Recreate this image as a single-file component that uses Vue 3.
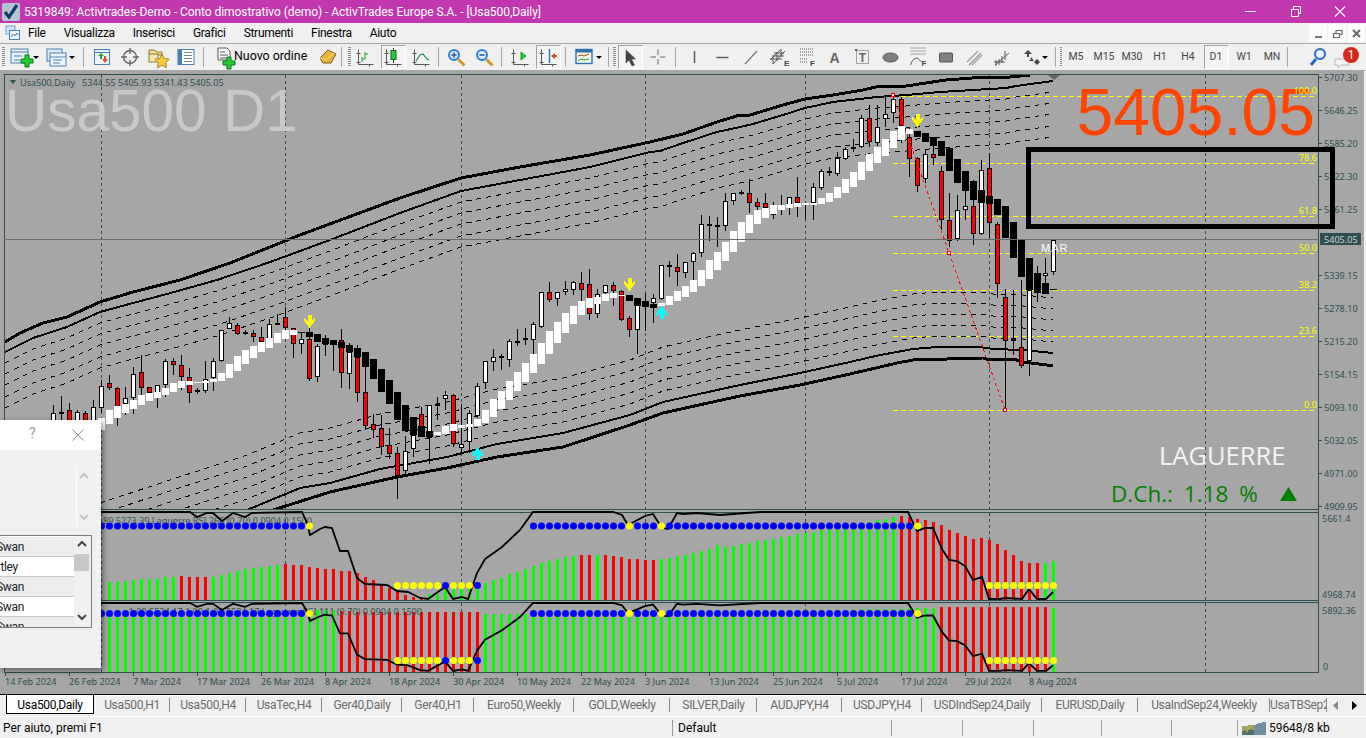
<script setup>
// ---------- toolbar icons (centre of every button is 0,0) ----------
const axes = '<path d="M-6.5 -7.5V7.5H8.5M-8.5 5.5h4M-8.5 -3.5h4M4.5 7.5v2" stroke="#555" fill="none"/>'
const zoomIcon = (plus) => `<circle cx="-2" cy="-2" r="5" fill="#dbeafa" stroke="#2f7fd0" stroke-width="2"/><path d="M2.500 2.500l6 6" stroke="#c89a2a" stroke-width="3"/><path d="M-4.500 -2h5${plus ? 'M-2 -4.500v5' : ''}" stroke="#2a5a9a" stroke-width="1.600"/>`
const dots = (x, y, w) => `<path d="M${x} ${y}h${w}M${x} ${y + 3}h${w}M${x} ${y + 6}h${w}" stroke="#555" stroke-dasharray="1 1"/>`

const icons = {
  newchart: '<rect x="-11" y="-8" width="17" height="14" fill="#eaf2fb" stroke="#4a7fb0"/><path d="M-11 -5h17M-8 -1h8M-8 3h6" stroke="#4a7fb0"/><path d="M-1 2h4v-4h4v4h4v4h-4v4h-4v-4h-4z" fill="#22cc33" stroke="#0a7a18"/>',
  profile: '<rect x="-10" y="-8" width="15" height="12" fill="#dde9f7" stroke="#4a7fb0"/><rect x="-7" y="-4" width="16" height="13" fill="#eef5fc" stroke="#4a7fb0"/><path d="M-7 0h16M-4 3h9M-4 6h7" stroke="#4a7fb0"/>',
  market: '<rect x="-7.5" y="-7.5" width="15" height="15" fill="#eaf2fb" stroke="#4a7fb0"/><path d="M-7.5 -4.5h15" stroke="#4a7fb0"/><path d="M-4 -1l3 -3l3 3h-2v3h-2v-3z" fill="#22aa33"/><path d="M0 2h2v-3h2v3h2l-3 4z" fill="#d8502a"/>',
  cross: '<circle r="6.5" fill="none" stroke="#666" stroke-width="1.4"/><path d="M0 -9v6M0 3v6M-9 0h6M3 0h6" stroke="#666" stroke-width="1.4"/>',
  star: '<path d="M-9 -7h6l2 2h5v3h-13z" fill="#f2d98a" stroke="#8a7a3a"/><rect x="-9" y="-3" width="9" height="8" fill="#f7e7b0" stroke="#8a7a3a"/><path d="M4 -3l2.2 4.5l5 .7l-3.6 3.5l.9 5l-4.5 -2.4l-4.5 2.4l.9 -5l-3.6 -3.5l5 -.7z" fill="#f7cf3a" stroke="#a8862a"/>',
  data: '<rect x="-8" y="-7.5" width="16" height="15" fill="#fff" stroke="#4a7fb0"/><rect x="-8" y="-7.5" width="4" height="15" fill="#4a7fb0"/><path d="M-2 -4.5h8M-2 -1.5h8M-2 1.5h8M-2 4.5h8" stroke="#6a8aa8"/>',
  order: '<path d="M-6 -9h9l3 3v9h-12z" fill="#fff" stroke="#555"/><path d="M-4 -5h5M-4 -2h8M-4 1h8" stroke="#555"/><path d="M-1 4h4v-4h4v4h4v4h-4v4h-4v-4h-4z" fill="#22cc33" stroke="#0a7a18"/>',
  auto: '<path d="M-8 1l8 -8l8 4l-5 9h-8z" fill="#e8b23a" stroke="#7a5a1a"/><path d="M-8 1l6 2l8 -7" fill="none" stroke="#fbe08a"/>',
  bars: axes + '<path d="M-3 5V0M-3 2H0M0 2V-5M0 -3H3" stroke="#119a22" fill="none"/>',
  candle: axes + '<path d="M0.5 -9V6" stroke="#333"/><rect x="-2" y="-6.500" width="5" height="9" fill="#22cc33" stroke="#145a2a"/>',
  line: axes + '<path d="M-5 4L-1 -2L2 -3L6 2L8 3" stroke="#2a8a4a" fill="none" stroke-width="1.2"/>',
  zin: zoomIcon(true),
  zout: zoomIcon(false),
  scroll: axes + '<path d="M1 -5v8l5 -4z" fill="#22cc33" stroke="#119a22"/>',
  shift: axes + '<path d="M1.5 -8V6" stroke="#2a6fb0" stroke-width="1.4"/><path d="M3 -1l4 -3v2h2v2h-2v2z" fill="#c8501a"/>',
  template: '<rect x="-8" y="-7.5" width="16" height="14" fill="#f5f7e5" stroke="#2f6fb0" stroke-width="1.4"/><rect x="-8" y="-7.5" width="16" height="3" fill="#2f6fb0"/><path d="M-6 -1l3 -1l3 1l5 -2" stroke="#b0401a" fill="none"/><path d="M-6 4l3 -2l3 1l5 -1" stroke="#2a9a4a" fill="none"/>',
  cursor: '<path d="M-4 -7V6l3 -3l3 6l2.500 -1l-3 -6h4z" fill="#444" stroke="#444" stroke-width=".6"/>',
  plus: '<path d="M0 -7.500v5.500M0 2v5.500M-7.500 0h5.500M2 0h5.500" stroke="#666"/>',
  vline: '<path d="M0.500 -6v12" stroke="#555" stroke-width="1.4"/>',
  hline: '<path d="M-6 0.500h12" stroke="#555" stroke-width="1.4"/>',
  trend: '<path d="M-6 7L6 -6" stroke="#777" stroke-width="1.2"/>',
  equi: '<path d="M-9 3l10 -10M-6 7L6 -6M-9 2h12M-7 -1h12M-5 -4h10M-6 7v-7M-2 4v-9M2 0v-8" stroke="#555" fill="none"/><text x="5" y="9" class="ic-l">E</text>',
  fib: dots(-7, -8, 13) + '<path d="M-7 2h8M-7 5h8" stroke="#555" stroke-dasharray="1 1"/><text x="3" y="9" class="ic-l">F</text>',
  letter: '<text x="0" y="6" text-anchor="middle" class="ic-a">A</text>',
  textbox: '<rect x="-5.500" y="-6.500" width="12" height="13" fill="none" stroke="#555" stroke-dasharray="1 1"/><rect x="-7" y="-8" width="2" height="2" fill="#555"/><text x="0.500" y="5" text-anchor="middle" class="ic-a ic-t">T</text>',
  ellipse: '<ellipse cx="0" cy="0.500" rx="7.500" ry="4.500" fill="#808080" stroke="#555"/>',
  fan: dots(-8, -9, 15) + '<path d="M-8 8Q-6 1 -1 1L3 5" stroke="#555" fill="none"/><text x="3" y="9" class="ic-l">F</text>',
  rect: '<rect x="-6.500" y="-4" width="13" height="9" rx="1" fill="#808080" stroke="#555"/>',
  chan: '<path d="M-7 5L4 -6M-5 8L7 -4M-2 8L8 -2" stroke="#999" stroke-width="1.3"/>',
  fork: '<path d="M-7 8L7 -4M-6 3V9M-3 2V8M0 -1V6M3 -6V3M-8 5H3" stroke="#555" fill="none"/>',
  arrows: '<path d="M-8 -3l4 -4l4 4h-3v3h-2v-3z" fill="#444"/><path d="M-3 3h2l-1 1zM-1 0l3 4l-4 0z" fill="#444"/><path d="M2 5l3 -3l3 3l-3 3z" fill="#444"/>',
  search: '<circle cx="2" cy="-3" r="5" fill="#eaf3fc" stroke="#2568c8" stroke-width="2"/><path d="M-2 2l-5 6" stroke="#2568c8" stroke-width="3"/>'
}

const tb1 = [
  { t: 'h', w: 8 },
  { i: 'newchart', w: 36, c: 14, dd: 28 }, { i: 'profile', w: 36, c: 13, dd: 28 },
  { t: 's', w: 8 },
  { i: 'market', w: 28 }, { i: 'cross', w: 28 }, { i: 'star', w: 28 }, { i: 'data', w: 28 },
  { t: 's', w: 8 }
]
const tb2 = [
  { i: 'auto', w: 20 }, { t: 's', w: 8 }, { t: 'h', w: 5 },
  { i: 'bars', w: 28 }, { i: 'candle', w: 28, on: true }, { i: 'line', w: 28 },
  { t: 's', w: 7 },
  { i: 'zin', w: 28 }, { i: 'zout', w: 28 },
  { t: 's', w: 8 },
  { i: 'scroll', w: 28 }, { i: 'shift', w: 28, on: true },
  { t: 's', w: 8 },
  { i: 'template', w: 35, c: 14, dd: 29 },
  { t: 's', w: 6 }, { t: 'h', w: 5 },
  { i: 'cursor', w: 28, on: true }, { i: 'plus', w: 28 },
  { t: 's', w: 8 },
  { i: 'vline', w: 28 }, { i: 'hline', w: 29 }, { i: 'trend', w: 28 }, { i: 'equi', w: 28 }, { i: 'fib', w: 28 },
  { i: 'letter', w: 27 }, { i: 'textbox', w: 28 }, { i: 'ellipse', w: 29 }, { i: 'fan', w: 27 }, { i: 'rect', w: 28 },
  { i: 'chan', w: 28 }, { i: 'fork', w: 28 }, { i: 'arrows', w: 36, c: 16, dd: 29 },
  { t: 's', w: 6 }, { t: 'h', w: 4 }
]
const frames = ['M5', 'M15', 'M30', 'H1', 'H4', 'D1', 'W1', 'MN']

const menus = ['File', 'Visualizza', 'Inserisci', 'Grafici', 'Strumenti', 'Finestra', 'Aiuto']

const tabs = [
  ['Usa500,Daily', 88], ['Usa500,H1', 76], ['Usa500,H4', 76], ['UsaTec,H4', 76], ['Ger40,Daily', 80], ['Ger40,H1', 72],
  ['Euro50,Weekly', 100], ['GOLD,Weekly', 96], ['SILVER,Daily', 87], ['AUDJPY,H4', 85], ['USDJPY,H4', 80],
  ['USDIndSep24,Daily', 120], ['EURUSD,Daily', 96], ['UsaIndSep24,Weekly', 132], ['UsaTBSep24,Weekly', 57]
]
const statusSeps = [672, 891, 962, 1033, 1101, 1171, 1237]

// ---------- candles: x, high, body top, body bottom, low, kind ----------
const candles = [
  [53,405,413,430,440,'w'],[61,396,412,414,440,'d'],[69,403,410,430,440,'r'],[77,410,412,430,440,'w'],[85,411,413,430,440,'r'],
  [93,400,407,430,440,'w'],[101,380,386,408,413,'w'],[109,375,383,388,390,'r'],[117,387,388,407,426,'r'],[125,387,398,404,415,'w'],
  [133,367,374,398,414,'w'],[141,355,372,388,395,'r'],[149,387,387,393,393,'r'],[157,385,385,393,408,'w'],[165,359,361,385,397,'w'],
  [173,358,361,365,375,'r'],[181,355,365,377,390,'r'],[189,368,377,393,403,'r'],[197,388,390,392,394,'d'],[205,361,379,391,393,'w'],
  [213,358,361,378,391,'w'],[221,330,330,361,362,'w'],[229,317,323,329,329,'w'],[237,323,325,334,335,'r'],[245,330,332,334,335,'d'],
  [253,330,333,337,342,'r'],[261,327,337,342,342,'r'],[269,319,324,342,345,'w'],[277,314,323,325,325,'d'],[285,307,317,328,330,'r'],
  [293,328,328,344,358,'r'],[301,332,339,344,354,'w'],[309,328,339,379,381,'r'],[317,344,346,377,382,'w'],[325,335,343,345,356,'d'],
  [333,340,344,345,371,'d'],[341,329,340,373,388,'r'],[349,343,352,374,389,'w'],[357,345,357,393,402,'r'],[365,360,392,426,430,'r'],
  [373,414,424,430,438,'r'],[381,415,428,447,455,'r'],[389,428,445,454,459,'r'],[397,447,453,476,499,'r'],[405,436,451,471,474,'w'],
  [413,417,435,449,457,'w'],[421,407,414,427,437,'r'],[429,405,405,438,464,'w'],[437,397,404,406,420,'d'],[445,391,395,399,410,'w'],
  [453,394,395,444,447,'r'],[461,404,444,448,453,'w'],[469,410,413,442,453,'w'],[477,383,386,416,418,'w'],[485,361,361,383,389,'w'],
  [493,349,357,362,371,'w'],[501,354,356,358,370,'d'],[509,339,341,360,367,'w'],[517,329,341,343,346,'d'],[525,328,338,340,345,'d'],
  [533,322,324,340,354,'w'],[541,292,292,327,328,'w'],[549,282,292,300,302,'r'],[557,292,292,299,306,'w'],[565,281,289,292,295,'w'],
  [573,281,282,290,295,'w'],[581,272,283,290,302,'r'],[589,269,284,314,320,'r'],[597,289,294,314,318,'w'],[605,285,285,293,296,'w'],
  [613,282,285,291,306,'r'],[621,290,291,320,321,'r'],[629,316,318,330,337,'r'],[637,298,298,330,354,'w'],[645,293,303,306,331,'d'],
  [653,294,298,303,323,'w'],[661,265,265,299,300,'w'],[669,261,265,267,277,'d'],[677,254,267,272,286,'r'],[685,262,262,273,278,'w'],
  [693,252,253,262,280,'w'],[701,215,224,253,257,'w'],[709,216,224,226,241,'d'],[717,217,225,227,247,'d'],[725,193,201,226,231,'w'],
  [733,193,193,201,205,'w'],[741,190,192,194,195,'d'],[749,179,193,203,213,'r'],[757,198,202,207,213,'r'],[765,193,203,208,213,'r'],
  [773,202,205,215,219,'w'],[781,195,207,208,215,'d'],[789,197,197,205,215,'w'],[797,177,197,203,217,'r'],[805,203,203,205,219,'d'],
  [813,183,187,203,220,'w'],[821,169,171,188,190,'w'],[829,167,171,173,176,'d'],[837,152,158,174,176,'w'],[845,147,149,159,160,'w'],
  [853,139,147,149,152,'w'],[861,115,118,147,148,'w'],[869,105,118,142,147,'r'],[877,105,127,143,146,'w'],[885,97,114,119,127,'w'],
  [893,94,99,113,123,'w'],[901,97,99,126,143,'r'],[909,127,137,159,177,'r'],[917,157,158,186,192,'r'],[925,150,154,179,183,'w'],
  [933,145,154,158,165,'r'],[941,166,171,220,230,'r'],[949,193,220,241,247,'r'],[957,195,210,239,241,'w'],[965,190,206,210,220,'w'],
  [973,180,206,234,245,'r'],[981,160,170,234,235,'w'],[989,153,168,223,238,'r'],[997,222,224,284,298,'r'],[1005,289,297,341,408,'r'],
  [1013,290,339,341,355,'r'],[1021,280,347,366,368,'r'],[1029,290,290,361,376,'w'],[1037,266,275,293,302,'d'],[1045,258,273,276,285,'w'],
  [1053,239,240,272,275,'w']
]

// blocks of the smoothed band: x, top, bottom, white?
const bandTop = [
  [101,418,430,1],[109,410,424,1],[117,406,418,1],[125,404,413,1],[133,400,409,1],[141,395,405,1],[149,393,401,1],[157,392,398,1],
  [165,388,395,1],[173,383,392,1],[181,381,388,1],[189,381,385,1],[197,382,383,1],[205,381,383,1],[213,379,382,1],[221,373,381,1],
  [229,364,378,1],[237,356,371,1],[245,350,364,1],[253,346,358,1],[261,342,352,1],[269,338,348,1],[277,333,343,1],[285,330,339,1],
  [293,330,335,1],[301,332,333,0],[309,332,337,0],[317,334,342,0],[325,338,344,0],[333,340,345,0],[341,342,348,0],[349,345,352,0],
  [357,348,357,0],[365,352,367,0],[373,359,379,0],[381,369,392,0],[389,380,404,0],[397,392,420,0],[405,405,431,0],[413,417,435,0],
  [421,426,437,0],[429,431,437,0],[437,432,435,1],[445,426,434,1],[453,424,431,1],[461,425,428,1],[469,424,427,1],[477,419,426,1],
  [485,410,423,1],[493,399,417,1],[501,391,409,1],[509,381,400,1],[517,372,391,1],[525,363,382,1],[533,354,373,1],[541,343,364,1],
  [549,331,354,1],[557,322,343,1],[565,313,333,1],[573,306,324,1],[581,301,315,1],[589,298,308,1],[597,297,304,1],[605,294,301,1],
  [613,293,298,1],[621,295,296,1],[629,295,301,0],[637,298,306,0],[645,301,307,0],[653,304,308,0],[661,303,306,1],[669,296,305,1],
  [677,291,301,1],[685,286,297,1],[693,280,292,1],[701,270,286,1],[709,260,279,1],[717,252,270,1],[725,242,261,1],[733,231,252,1],
  [741,222,242,1],[749,215,233,1],[757,210,224,1],[765,208,218,1],[773,205,214,1],[781,205,210,1],[789,204,208,1],[797,203,207,1],
  [805,203,205,1],[813,203,205,1],[821,198,204,1],[829,193,202,1],[837,187,198,1],[845,179,193,1],[853,172,187,1],[861,162,180,1],
  [869,154,171,1],[877,147,163,1],[885,139,156,1],[893,131,148,1],[901,126,140,1],[909,129,134,1],[917,131,137,0],[925,133,142,0],
  [933,137,146,0],[941,141,156,0],[949,148,171,0],[957,159,183,0],[965,171,191,0],[973,181,200,0],[981,190,203,0],[989,196,204,0],
  [997,199,215,0],[1005,206,238,0],[1013,222,258,0],[1021,240,277,0],[1029,258,290,0],[1037,273,293,0],[1045,283,294,0],[1053,289,290,0]
]

// ---------- envelopes ----------
const T1 = [[5,342],[20,333],[43,323],[67,317],[100,302],[133,292],[180,280],[230,263],[300,235],[400,198],[461,178],[520,167],[590,155],[650,142],[683,134],[717,122],[740,115],[750,115],[783,105],[805,99],[833,95],[863,90],[880,86],[906,86],[946,80],[985,77],[1010,77],[1030,75]]
const T2 = [[5,352],[33,338],[67,327],[100,312],[133,303],[167,294],[217,280],[270,262],[330,240],[400,213],[461,191],[520,180],[590,167],[650,152],[660,151],[683,143],[717,132],[740,127],[753,124],[783,115],[805,108],[833,102],[877,97],[906,95],[940,92],[1006,88],[1016,86],[1053,81]]
const L1 = [[247,510],[300,488],[330,483],[380,469],[447,457],[497,444],[563,433],[630,415],[663,402],[690,396],[740,385],[800,373],[850,362],[880,355],[897,352],[913,349],[937,347],[980,347],[993,349],[1023,350],[1053,353]]
const L2 = [[273,510],[330,492],[397,477],[447,468],[497,457],[563,447],[630,425],[663,413],[690,407],[740,396],[800,385],[850,374],[880,367],[897,363],[913,360],[947,359],[983,358],[990,360],[1013,359],[1023,362],[1047,365],[1053,365]]
const toPts = (a, dy = 0) => a.map(([x, y]) => `${x},${y + dy}`).join(' ')
const upDash = [11, 22, 33, 45, 56].map((d) => toPts(T2, d))
// the lower dashed family runs on to the left, below the bottom of the pane
const L1far = [[100, 558], [170, 535], ...L1]
const lowDash = [-11, -22, -33, -44, -55].map((d) => toPts(L1far, d))
const grids = [101, 285, 461, 645, 805, 989, 1205]

// ---------- fibonacci levels ----------
const fibs = [['100.0', 96], ['78.6', 163], ['61.8', 216], ['50.0', 253], ['38.2', 290], ['23.6', 336], ['0.0', 410]]
const marks = [[893, 95], [949, 253], [1005, 410]]

// ---------- indicator panes ----------
const rsi = [[100,512],[190,512],[197,517],[207,513],[213,513],[222,521],[233,513],[245,517],[252,513],[302,512],[307,523],[310,535],[320,529],[325,527],[332,528],[340,551],[348,551],[357,578],[365,584],[387,585],[397,591],[408,592],[420,598],[428,599],[445,587],[453,599],[462,597],[468,599],[477,573],[485,559],[502,547],[520,530],[533,512],[613,512],[622,515],[628,525],[645,516],[653,514],[662,528],[668,529],[677,513],[683,514],[697,513],[720,515],[760,512],[908,512],[917,531],[925,528],[933,528],[942,549],[949,560],[957,561],[965,566],[973,580],[982,577],[989,599],[1000,599],[1005,598],[1022,599],[1029,589],[1037,599],[1046,599],[1053,592]]
const rsi1 = toPts(rsi)
const rsi2 = rsi.map(([x, y]) => `${x},${(603 + (y - 512) * 0.78).toFixed(1)}`).join(' ')

const leftTops = [582,582,581,580,579,579,579,577,577,576,577,577,577,577,575,573,571,569,568,567,566,565,564,565,565,567,568]
const midZy = [207,207,212,212,220,230,240,255,263,275,285,290,290,283,280,268,268,268,265,260,250,240,233,222,215,208,198,190,183,178,172,167,165,165,165,165,168,170,176,178,180,180,177,173,168,165,158,152,147,135]
const endZy = [57,52,48,50,58,60,66,75,90,98,107,117,115,120,132,150,165,183,188,188,188,183]
const isRed1 = (x) => (x >= 181 && x <= 205) || (x >= 285 && x <= 421) || x === 581 || x === 589 || (x >= 605 && x <= 653) || (x >= 901 && x <= 1037)
const hist1 = []
const hist2 = []
for (let x = 109; x <= 1053; x += 8) {
  let top
  if (x <= 317) top = leftTops[(x - 109) / 8]
  else if (x <= 717) top = 500 + midZy[(x - 325) / 8] / 3
  else if (x < 885) top = 547 - ((x - 725) / 160) * 28
  else top = 500 + endZy[(x - 885) / 8] / 3
  hist1.push({ x, top: Math.round(top), red: isRed1(x) })

  const red2 = (x >= 341 && x <= 477) || (x >= 941 && x <= 1045)
  let t2 = 610
  if (x >= 341 && x <= 349) t2 = 611
  else if (x >= 357 && x <= 477) t2 = 612
  else if (x >= 485 && x < 533) t2 = 614
  else if (x >= 533 && x <= 720) t2 = 612
  else if (x > 720 && x <= 933) t2 = Math.round(612 - ((x - 720) / 213) * 4)
  else if (x >= 941) t2 = x === 1053 ? 608 : 607
  hist2.push({ x, top: t2, red: red2 })
}
const dotsTop = []
for (let x = 101; x <= 917; x += 8) {
  if (x > 309 && x < 533) continue
  dotsTop.push({ x, y: x === 309 || x === 629 || x === 661 || x === 917 ? 1 : 0 })
}
const dotsLow = []
for (let x = 397; x <= 477; x += 8) dotsLow.push({ x, y: x === 445 || x === 477 ? 0 : 1 })
for (let x = 989; x <= 1053; x += 8) dotsLow.push({ x, y: 1 })

// ---------- axis ----------
const prices = [['5707.30',77],['5646.25',110],['5585.20',143],['5522.30',176],['5461.25',209],['5339.15',275],['5278.10',308],['5215.20',341],['5154.15',374],['5093.10',407],['5032.05',440],['4971.00',473],['4909.95',506]]
const dates = ['14 Feb 2024','26 Feb 2024','7 Mar 2024','17 Mar 2024','26 Mar 2024','8 Apr 2024','18 Apr 2024','30 Apr 2024','10 May 2024','22 May 2024','3 Jun 2024','13 Jun 2024','25 Jun 2024','5 Jul 2024','17 Jul 2024','29 Jul 2024','8 Aug 2024']
const arrowDown = '-2,0 2,0 2,6 5,3 6,5 0,13 -6,5 -5,3 -2,6'
const arrowUp = '-2,13 2,13 2,7 5,10 6,8 0,0 -6,8 -5,10 -2,7'
const rows = [['Black Swan', 'g'], ['Gartley', 'w'], ['White Swan', 'g'], ['Black Swan', 'w'], ['White Swan', 'g']]
</script>

<template>
  <div class="app">
    <header class="title">
      <svg class="logo" width="18" height="18" viewBox="0 0 18 18">
        <rect width="18" height="18" rx="2" fill="#b8c4d2" />
        <path d="M3 9l4 5l8 -12" fill="none" stroke="#123a6b" stroke-width="3.200" />
      </svg>
      <span class="title-text">5319849: Activtrades-Demo - Conto dimostrativo (demo) - ActivTrades Europe S.A. - [Usa500,Daily]</span>
      <div class="win">
        <svg width="45" height="22" viewBox="0 0 45 22"><path d="M17 10.500h11" stroke="#fff" /></svg>
        <svg width="45" height="22" viewBox="0 0 45 22"><path d="M18.500 8.500h7v7h-7zM20.500 8v-2.500h7v7h-2" fill="none" stroke="#fff" /></svg>
        <svg width="45" height="22" viewBox="0 0 45 22"><path d="M17 5.500l10 10M27 5.500l-10 10" stroke="#fff" stroke-width="1.100" /></svg>
      </div>
    </header>

    <nav class="menu">
      <svg class="menu-ic" width="16" height="16" viewBox="0 0 16 16">
        <rect x="1" y="1" width="9" height="8" fill="#d5e5f7" stroke="#6f9ccc" />
        <rect x="4.500" y="5.500" width="10" height="9" fill="#f2f7fd" stroke="#4a7fb0" />
        <path d="M6 12l2 -3l2 2l2 -3l1 2" fill="none" stroke="#4a7fb0" />
      </svg>
      <span v-for="m in menus" :key="m" class="menu-item">{{ m }}</span>
      <div class="mdi">
        <span class="mdi-b"><svg width="17" height="17" viewBox="0 0 17 17"><rect x="5" y="11" width="7" height="2" fill="#777" /></svg></span>
        <span class="mdi-b"><svg width="17" height="17" viewBox="0 0 17 17"><path d="M4.500 8.500h6v4h-6zM7 8V5.500h6v4h-2" fill="none" stroke="#666" stroke-width="1.200" /></svg></span>
        <span class="mdi-b"><svg width="17" height="17" viewBox="0 0 17 17"><path d="M5 5l7 7M12 5l-7 7" stroke="#666" stroke-width="2" /></svg></span>
      </div>
    </nav>

    <div class="toolbar">
      <template v-for="(b, i) in tb1" :key="'a' + i">
        <span v-if="b.t === 'h'" class="handle" :style="{ width: b.w + 'px' }"></span>
        <span v-else-if="b.t === 's'" class="sep" :style="{ width: b.w + 'px' }"></span>
        <span v-else class="btn" :style="{ width: b.w + 'px' }">
          <svg :width="b.w" height="26" :viewBox="`${-(b.c ?? b.w / 2)} -13 ${b.w} 26`" v-html="icons[b.i]"></svg>
          <i v-if="b.dd" class="dd" :style="{ left: b.dd - 3 + 'px' }"></i>
        </span>
      </template>
      <span class="btn order">
        <svg width="32" height="26" viewBox="-16 -13 32 26" v-html="icons.order"></svg>
        <span class="order-text">Nuovo ordine</span>
      </span>
      <template v-for="(b, i) in tb2" :key="'b' + i">
        <span v-if="b.t === 'h'" class="handle" :style="{ width: b.w + 'px' }"></span>
        <span v-else-if="b.t === 's'" class="sep" :style="{ width: b.w + 'px' }"></span>
        <span v-else class="btn" :class="{ on: b.on }" :style="{ width: b.w + 'px' }">
          <svg :width="b.w" height="26" :viewBox="`${-(b.c ?? b.w / 2)} -13 ${b.w} 26`" v-html="icons[b.i]"></svg>
          <i v-if="b.dd" class="dd" :style="{ left: b.dd - 3 + 'px' }"></i>
        </span>
      </template>
      <span v-for="f in frames" :key="f" class="tf" :class="{ on: f === 'D1' }">{{ f }}</span>
      <span class="sep tail"></span>
      <span class="btn srch"><svg width="28" height="26" viewBox="-14 -13 28 26" v-html="icons.search"></svg></span>
      <span class="btn chat">
        <svg width="28" height="26" viewBox="0 0 28 26">
          <path d="M3 15h14v6h-8l-3 3v-3h-3z" fill="#f4f4f4" stroke="#b8b8b8" />
          <circle cx="19" cy="11" r="8" fill="#d8261c" />
        </svg>
        <span class="badge">1</span>
      </span>
    </div>

    <main class="chart">
      <svg class="plot" width="1366" height="623" viewBox="0 71 1366 623">
        <defs>
          <clipPath id="main-pane"><rect x="5" y="75" width="1313" height="434" /></clipPath>
        </defs>
        <rect x="0" y="71" width="1366" height="623" fill="#a6a6a6" />
        <rect x="1364" y="71" width="2" height="623" fill="#f4f4f4" />

        <!-- frames -->
        <g class="crisp" stroke="#2f4f4f" fill="none">
          <path d="M4.500 74.500H1318.500V672.500H4.500z" />
          <path d="M4 509.500H1319M4 512.500H1319M4 600.500H1319M4 602.500H1319" />
        </g>
        <g class="crisp" stroke="#2f4f4f">
          <line v-for="g in grids" :key="g" :x1="g + .5" y1="75" :x2="g + .5" y2="672" stroke-dasharray="3 3" />
        </g>

        <!-- fib levels under the price -->
        <g class="crisp" stroke="#ffff00">
          <line v-for="f in fibs" :key="f[0]" x1="893" :y1="f[1] + .5" x2="1317" :y2="f[1] + .5" stroke-dasharray="5 3" />
        </g>

        <!-- envelopes -->
        <g class="crisp" fill="none" stroke="#000" clip-path="url(#main-pane)">
          <polyline v-for="(p, i) in upDash" :key="'u' + i" :points="p" stroke-dasharray="5 5" />
          <polyline v-for="(p, i) in lowDash" :key="'l' + i" :points="p" stroke-dasharray="5 5" />
          <polyline :points="toPts(T1)" stroke-width="3" />
          <polyline :points="toPts(T2)" stroke-width="2" />
          <polyline :points="toPts(L1)" stroke-width="2" />
          <polyline :points="toPts(L2)" stroke-width="3" />
        </g>

        <!-- candles -->
        <g class="crisp">
          <g v-for="c in candles" :key="c[0]">
            <line :x1="c[0] + .5" :y1="c[1]" :x2="c[0] + .5" :y2="c[4]" stroke="#000" />
            <rect v-if="c[5] === 'd'" :x="c[0] - 2" :y="c[2]" width="5" :height="c[3] - c[2]" fill="#000" />
            <rect v-else :x="c[0] - 1.5" :y="c[2] + .5" width="4" :height="Math.max(c[3] - c[2] - 1, 1)" :fill="c[5] === 'r' ? '#ff0000' : '#ffffff'" stroke="#000" />
          </g>
          <rect v-for="b in bandTop" :key="'b' + b[0]" :x="b[0] - 3" :y="b[1]" width="7" :height="b[2] - b[1]" :fill="b[3] ? '#ffffff' : '#000000'" />
        </g>

        <!-- trend of the fibonacci -->
        <line class="crisp" x1="893" y1="95" x2="1005" y2="410" stroke="#ff0000" stroke-dasharray="3 3" />
        <g class="crisp">
          <rect v-for="m in marks" :key="m[0]" :x="m[0] - 1.500" :y="m[1] - 1.500" width="3" height="3" fill="#fff" stroke="#ff0000" />
        </g>

        <!-- signal arrows -->
        <g class="crisp">
          <polygon :points="arrowDown" transform="translate(309.500 315)" fill="#ffff00" />
          <polygon :points="arrowDown" transform="translate(629.500 278)" fill="#ffff00" />
          <polygon :points="arrowDown" transform="translate(917.500 114)" fill="#ffff00" />
          <polygon :points="arrowUp" transform="translate(477.500 447)" fill="#00ffff" />
          <polygon :points="arrowUp" transform="translate(661.500 306)" fill="#00ffff" />
        </g>
        <path d="M1048 75h12l-6 5z" fill="#666" />

        <!-- price line -->
        <line class="crisp" x1="4" y1="239.500" x2="1319" y2="239.500" stroke="#6a6a6a" />

        <!-- labels on the chart -->
        <path d="M10 80h6l-3 4z" fill="#2f4f4f" />
        <text x="20" y="85.500" class="ax">Usa500,Daily</text>
        <text x="82" y="85.500" class="ax">5344.55 5405.93 5341.43 5405.05</text>
        <text x="5" y="131" class="big">Usa500 D1</text>
        <text x="1315" y="135" text-anchor="end" class="quote">5405.05</text>
        <text x="1041" y="252" class="mar">MAR</text>
        <text x="1159" y="465" class="lag">LAGUERRE</text>
        <text x="1111" y="502" class="dch">D.Ch.: 1.18 %</text>
        <path d="M1288.500 487l8.500 14h-17z" fill="#008000" />
        <text v-for="f in fibs" :key="'t' + f[0]" x="1317" :y="f[1] - 2.500" text-anchor="end" class="fibl">{{ f[0] }}</text>

        <!-- pane 1 -->
        <g class="crisp">
          <rect v-for="h in hist1" :key="'h' + h.x" :x="h.x - 1" :y="h.top" width="3" :height="600 - h.top" :fill="h.red ? '#ff0000' : '#00ff00'" />
        </g>
        <text x="312" y="523.500" text-anchor="end" class="ax ax-i">89 5273.39  Laguerre RSI 266 (0.70) 0.0904 0.1500</text>
        <polyline :points="rsi1" fill="none" stroke="#000" stroke-width="1.800" />
        <circle v-for="d in dotsTop" :key="'d' + d.x" :cx="d.x + .5" cy="526" r="3.500" :fill="d.y ? '#ffff00' : '#0000ff'" />
        <circle v-for="d in dotsLow" :key="'e' + d.x" :cx="d.x + .5" cy="585.500" r="3.500" :fill="d.y ? '#ffff00' : '#0000ff'" />

        <!-- pane 2 -->
        <g class="crisp">
          <rect v-for="h in hist2" :key="'k' + h.x" :x="h.x - 1" :y="h.top" width="3" :height="672 - h.top" :fill="h.red ? '#ff0000' : '#00ff00'" />
        </g>
        <text x="422" y="615" text-anchor="end" class="ax">1.00 5524.17  1.00 1.00 5524.17  Laguerre RSI 111 (0.70) 0.0904 0.1500</text>
        <polyline :points="rsi2" fill="none" stroke="#000" stroke-width="1.800" />
        <circle v-for="d in dotsTop" :key="'f' + d.x" :cx="d.x + .5" cy="613.500" r="3.500" :fill="d.y ? '#ffff00' : '#0000ff'" />
        <circle v-for="d in dotsLow" :key="'g' + d.x" :cx="d.x + .5" cy="660.500" r="3.500" :fill="d.y ? '#ffff00' : '#0000ff'" />

        <!-- axes -->
        <g class="crisp" stroke="#2f4f4f">
          <line v-for="p in prices" :key="'pt' + p[0]" x1="1319" :y1="p[1] + .5" x2="1322" :y2="p[1] + .5" />
          <line v-for="(d, i) in dates" :key="'dt' + i" :x1="5.500 + i * 64" y1="672" :x2="5.500 + i * 64" y2="676" />
        </g>
        <text v-for="p in prices" :key="p[0]" x="1324" :y="p[1] + 3.500" class="ax">{{ p[0] }}</text>
        <text x="1322" y="522" class="ax">5661.4</text>
        <text x="1322" y="597.500" class="ax">4968.74</text>
        <text x="1322" y="613.500" class="ax">5892.36</text>
        <text x="1323" y="669.500" class="ax">0</text>
        <text v-for="(d, i) in dates" :key="d" :x="5 + i * 64" y="684.500" class="ax">{{ d }}</text>

        <rect x="1320" y="233" width="41" height="12" fill="#2f4f4f" />
        <text x="1324" y="243" class="ax tag">5405.05</text>

        <!-- black box drawn over everything -->
        <rect class="crisp" x="1028.500" y="149.500" width="304" height="77" fill="none" stroke="#000" stroke-width="5" />
      </svg>

      <aside class="dialog">
        <div class="d-head">
          <span class="d-q">?</span>
          <svg class="d-x" width="12" height="12" viewBox="0 0 12 12"><path d="M.5 .5l11 11M11.500 .5l-11 11" stroke="#8a8a8a" /></svg>
        </div>
        <div class="d-body">
          <div class="d-scroll">
            <svg width="10" height="7" viewBox="0 0 10 7"><path d="M1 6l4 -4l4 4" fill="none" stroke="#c4c4c4" stroke-width="2" /></svg>
            <svg width="10" height="7" viewBox="0 0 10 7"><path d="M1 1l4 4l4 -4" fill="none" stroke="#c4c4c4" stroke-width="2" /></svg>
          </div>
          <div class="d-list">
            <div class="d-rows">
              <div v-for="(r, i) in rows" :key="i" class="d-row" :class="r[1]">
                <span :class="r[0] === 'Gartley' ? 'short' : 'long'">{{ r[0] }}</span>
              </div>
            </div>
            <div class="d-bar">
              <svg width="15" height="14" viewBox="0 0 15 14"><path d="M4 9l4 -4l4 4" fill="none" stroke="#444" stroke-width="2" /></svg>
              <span class="d-thumb"></span>
              <svg class="d-dn" width="15" height="14" viewBox="0 0 15 14"><path d="M4 5l4 4l4 -4" fill="none" stroke="#444" stroke-width="2" /></svg>
            </div>
          </div>
        </div>
      </aside>
    </main>

    <div class="tabs">
      <span v-for="(t, i) in tabs" :key="t[0]" class="tab" :class="{ active: i === 0 }" :style="{ width: t[1] + 'px' }">{{ t[0] }}</span>
      <span class="t-arrows">
        <svg width="7" height="9" viewBox="0 0 7 9"><path d="M5 0v9L0 4.500z" fill="#888" /></svg>
        <svg width="7" height="9" viewBox="0 0 7 9"><path d="M1 0v9l5 -4.500z" fill="#000" /></svg>
      </span>
    </div>

    <footer class="status">
      <span class="st-help">Per aiuto, premi F1</span>
      <span class="st-def">Default</span>
      <i v-for="s in statusSeps" :key="s" class="st-sep" :style="{ left: s + 'px' }"></i>
      <svg class="st-bars" width="24" height="14" viewBox="0 0 24 14">
        <path d="M1 14V5M3 14V5M5 14V5M7 14V4M9 14V4M11 14V4" stroke="#6b7a00" stroke-width="1.200" />
        <path d="M13 14V4M15 14V3M17 14V2M19 14V2M21 14V1M23 14V1" stroke="#1f4f6f" stroke-width="1.200" />
        <path d="M1 14v-4M3 14v-5M5 14v-3M7 14v-5M9 14v-6M11 14v-5" stroke="#1f4f6f" stroke-width="1.200" />
      </svg>
      <span class="st-kb">59648/8 kb</span>
    </footer>
  </div>
</template>

<style>
html, body { margin: 0; padding: 0; background: #f0f0f0; overflow: hidden; }
.ic-l { font-family: "Liberation Sans", sans-serif; font-size: 8px; font-weight: 700; fill: #444; }
.ic-a { font-family: "Liberation Sans", sans-serif; font-size: 14px; font-weight: 700; fill: #666; }
.ic-t { font-size: 12px; }
</style>

<style scoped>
.app {
  width: 1366px;
  height: 738px;
  display: flex;
  flex-direction: column;
  overflow: hidden;
  font-family: Roboto, "Noto Sans", sans-serif;
  font-size: 12px;
  color: #000;
  background: #f0f0f0;
}
.title {
  height: 23px;
  flex: none;
  background: #c237ae;
  color: #fff;
  display: flex;
  align-items: center;
  position: relative;
}
.logo { margin-left: 2px; flex: none; }
.title-text { margin-left: 4px; font-size: 12px; letter-spacing: -.06px; white-space: nowrap; }
.win { margin-left: auto; display: flex; margin-right: 3px; padding-right: 0; }
.win svg { display: block; margin-left: 0; }
.menu {
  height: 20px;
  flex: none;
  display: flex;
  align-items: center;
  background: #f0f0f0;
  position: relative;
}
.menu-ic { margin-left: 5px; margin-right: 7px; flex: none; }
.menu-item { margin-right: 18px; font-size: 12px; letter-spacing: -.3px; }
.mdi { margin-left: auto; display: flex; gap: 1px; margin-right: 1px; }
.mdi-b { width: 18px; height: 18px; background: #fbfbfb; display: flex; align-items: center; justify-content: center; }
.toolbar {
  height: 26px;
  flex: none;
  display: flex;
  align-items: stretch;
  border-top: 1px solid #a8a8a8;
  border-bottom: 1px solid #a8a8a8;
  background: #f0f0f0;
}
.handle {
  flex: none;
  background-image: repeating-linear-gradient(to bottom, #8a8a8a 0, #8a8a8a 1px, transparent 1px, transparent 2px);
  background-size: 3px 20px;
  background-repeat: no-repeat;
  background-position: 2px 3px;
}
.sep { flex: none; position: relative; }
.sep::after {
  content: "";
  position: absolute;
  left: 3px;
  top: 3px;
  bottom: 3px;
  width: 1px;
  background: #a8a8a8;
}
.btn { flex: none; position: relative; display: block; height: 26px; }
.btn svg { display: block; }
.btn.on::before, .tf.on::before {
  content: "";
  position: absolute;
  left: 2px;
  right: 1px;
  top: 1px;
  bottom: 1px;
  border: 1px solid #fff;
  border-top-color: #a0a0a0;
  border-left-color: #a0a0a0;
  background-image: repeating-conic-gradient(#fbfbfb 0 25%, #ececec 0 50%);
  background-size: 2px 2px;
}
.btn.on svg { position: relative; }
.dd {
  position: absolute;
  top: 12px;
  width: 0;
  height: 0;
  border-left: 3px solid transparent;
  border-right: 3px solid transparent;
  border-top: 3px solid #000;
}
.order { width: 110px; display: flex; }
.order svg { flex: none; }
.order-text { font-size: 12.4px; margin-left: -6px; line-height: 24px; white-space: nowrap; }
.tf {
  flex: none;
  position: relative;
  width: 28px;
  text-align: center;
  line-height: 26px;
  font-size: 10.5px;
  color: #444;
}
.tf.on { z-index: 0; }
.tf.on::before { z-index: -1; }
.tail { width: 18px; }
.tail::after { left: 1px; }
.srch { width: 28px; }
.chat { width: 28px; }
.badge {
  position: absolute;
  left: 15px;
  top: 5px;
  width: 8px;
  text-align: center;
  color: #fff;
  font-size: 12px;
  line-height: 12px;
}
.chart { flex: 1; position: relative; min-height: 0; background: #a6a6a6; }
.plot { display: block; }
.crisp { shape-rendering: crispEdges; }
.ax {
  font-family: "Noto Sans", Roboto, sans-serif;
  font-size: 9.1px;
  fill: #2f4f4f;
  white-space: pre;
}
.ax-i { fill: #3c5858; }
.tag { fill: #c8d4d4; }
.big { font-family: "Liberation Sans", Arial, sans-serif; font-size: 58.5px; fill: #c9c9c9; }
.quote { font-family: "Liberation Sans", Arial, sans-serif; font-size: 66px; fill: #ff4500; }
.mar { font-family: "Liberation Sans", Arial, sans-serif; font-size: 11px; fill: #fff; letter-spacing: 1px; }
.lag { font-family: "Open Sans", Roboto, sans-serif; font-size: 25.5px; fill: #f4f4f4; }
.dch { font-family: "Open Sans", Roboto, sans-serif; font-size: 22.5px; fill: #008000; word-spacing: 5px; }
.fibl { font-family: "Noto Sans", Roboto, sans-serif; font-size: 9.2px; fill: #ffff00; }
.dialog {
  position: absolute;
  left: 0;
  top: 349px;
  width: 101px;
  height: 248px;
  background: #f0f0f0;
  box-shadow: 2px 2px 6px rgba(0, 0, 0, .45);
  display: flex;
  flex-direction: column;
  overflow: hidden;
}
.d-head { height: 30px; flex: none; background: #fff; position: relative; }
.d-q { position: absolute; left: 29px; top: 5px; font-size: 14px; color: #9a9a9a; }
.d-x { position: absolute; left: 72px; top: 9px; }
.d-body { flex: 1; position: relative; }
.d-scroll {
  margin: 16px 0 0 76px;
  height: 61px;
  width: 15px;
  border-left: 1px solid #fff;
  display: flex;
  flex-direction: column;
  justify-content: space-between;
  align-items: center;
  padding: 6px 0 6px;
  box-sizing: border-box;
}
.d-list {
  margin-top: 8px;
  width: 92px;
  height: 93px;
  border: 1px solid #7c7c84;
  border-left: none;
  box-sizing: border-box;
  display: flex;
  background: #fff;
}
.d-rows { width: 74px; overflow: hidden; flex: none; padding-top: 1px; }
.d-row {
  height: 20px;
  box-sizing: border-box;
  border-bottom: 1px solid #c8c8c8;
  font-size: 12px;
  letter-spacing: -.3px;
  line-height: 21px;
  color: #222;
  display: flex;
  justify-content: flex-end;
  white-space: nowrap;
}
.d-row span { flex: none; }
.d-row.g { background: #ececec; }
.d-row.w { background: #fff; }
.d-row .long { margin-right: 50px; }
.d-row .short { margin-right: 56px; }
.d-bar { flex: 1; background: #f0f0f0; display: flex; flex-direction: column; padding-top: 1px; }
.d-bar svg { display: block; flex: none; }
.d-thumb { display: block; width: 15px; height: 17px; background: #c8c8c8; margin-top: 3px; flex: none; }
.d-dn { margin-top: auto; margin-bottom: 3px; }
.tabs {
  height: 21px;
  flex: none;
  display: flex;
  align-items: stretch;
  border-top: 1px solid #000;
  background: #f0f0f0;
  padding-left: 6px;
  position: relative;
  box-shadow: inset 0 1px 0 #fff;
}
.tab {
  flex: none;
  box-sizing: border-box;
  font-size: 12px;
  letter-spacing: -.3px;
  color: #6a6a6a;
  text-align: center;
  line-height: 20px;
  white-space: nowrap;
  overflow: hidden;
  position: relative;
}
.tab::after {
  content: "";
  position: absolute;
  right: 0;
  top: 3px;
  bottom: 4px;
  width: 1px;
  background: #8a8a8a;
}
.tab:last-of-type { text-align: left; padding-left: 12px; }
.tab:last-of-type::after { display: none; }
.tab.active {
  background: #fff;
  color: #000;
  border: 1px solid #000;
  border-top: none;
  height: 19px;
}
.tab.active::after { display: none; }
.t-arrows { margin-left: 6px; display: flex; gap: 11px; align-items: center; }
.status {
  height: 22px;
  flex: none;
  border-top: 1px solid #fff;
  box-sizing: border-box;
  position: relative;
  display: flex;
  align-items: center;
  background: #f0f0f0;
}
.st-help { position: absolute; left: 3px; font-size: 12px; }
.st-def { position: absolute; left: 678px; font-size: 12px; }
.st-kb { position: absolute; left: 1269px; font-size: 12px; letter-spacing: -.05px; }
.st-sep { position: absolute; top: 3px; bottom: 2px; width: 1px; background: #9a9a9a; }
.st-bars { position: absolute; left: 1242px; top: 4px; }
</style>
